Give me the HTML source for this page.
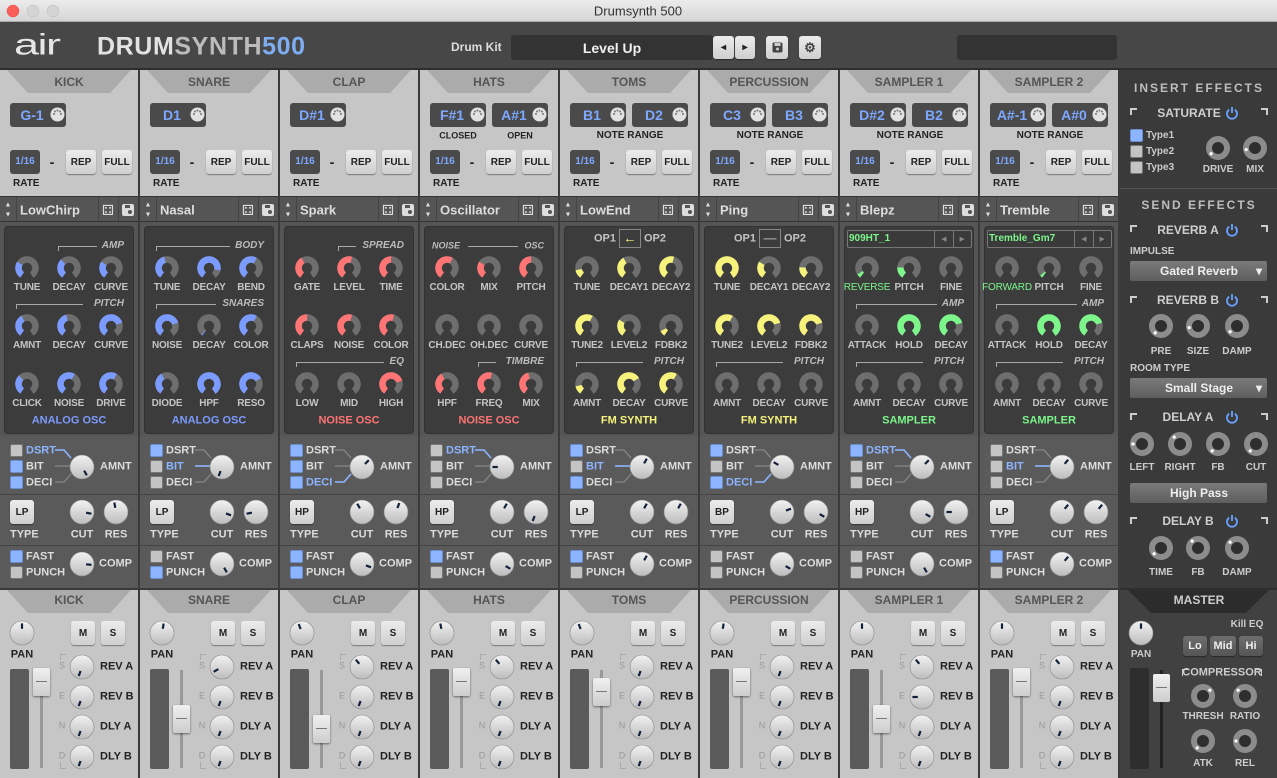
<!DOCTYPE html>
<html><head><meta charset="utf-8">
<style>
*{margin:0;padding:0;box-sizing:border-box}
body{width:1277px;height:778px;overflow:hidden;background:#3a3a3a;font-family:"Liberation Sans",sans-serif;font-weight:bold}
#app{position:relative;width:1277px;height:778px;overflow:hidden}
.a{position:absolute}
.t{position:absolute;white-space:nowrap;transform:translate(-50%,-50%);line-height:1}
.tl{position:absolute;white-space:nowrap;transform:translateY(-50%);line-height:1}
.tr{position:absolute;white-space:nowrap;transform:translate(-100%,-50%);line-height:1}
.btn{position:absolute;background:linear-gradient(#ececec,#cfcfcf);border-radius:3px;box-shadow:0 1px 1px rgba(0,0,0,.4);color:#222;font-size:10px;display:flex;align-items:center;justify-content:center}
.cb{position:absolute;width:13px;height:13px;border-radius:2px;background:#c4c4c4;border:1px solid #777}
.cb.on{background:#8cb4ff;border-color:#6a8fd0}
</style></head><body><div id="app"></div>
<script>
var H='';
function d(x,y,w,h,st){H+='<div class="a" style="left:'+x+'px;top:'+y+'px;width:'+w+'px;height:'+h+'px;'+(st||'')+'"></div>';}
function t(x,y,s,c,fs,ex){H+='<div class="t" style="left:'+x+'px;top:'+y+'px;color:'+c+';font-size:'+fs+'px;'+(ex||'')+'">'+s+'</div>';}
function tl(x,y,s,c,fs,ex){H+='<div class="tl" style="left:'+x+'px;top:'+y+'px;color:'+c+';font-size:'+fs+'px;'+(ex||'')+'">'+s+'</div>';}
function tr(x,y,s,c,fs,ex){H+='<div class="tr" style="left:'+x+'px;top:'+y+'px;color:'+c+';font-size:'+fs+'px;'+(ex||'')+'">'+s+'</div>';}
function btn(x,y,w,h,s,fs){H+='<div class="btn" style="left:'+x+'px;top:'+y+'px;width:'+w+'px;height:'+h+'px;font-size:'+(fs||10)+'px">'+s+'</div>';}
function cb(x,y,on){H+='<div class="cb'+(on?' on':'')+'" style="left:'+x+'px;top:'+y+'px"></div>';}
var C=2*Math.PI*8.5;
function ring(x,y,col,v){
 H+='<svg class="a" style="left:'+(x-14)+'px;top:'+(y-14)+'px" width="28" height="28"><g transform="rotate(125 14 14)"><circle cx="14" cy="14" r="8.5" fill="none" stroke="#6e6e6e" stroke-width="6.5" stroke-dasharray="'+(0.805*C)+' '+C+'"/>'+(v>0?'<circle cx="14" cy="14" r="8.5" fill="none" stroke="'+col+'" stroke-width="6.5" stroke-dasharray="'+(v*0.805*C)+' '+C+'"/>':'')+'</g></svg>';}
function lk(x,y,ang,r){ r=r||12;
 var a=(ang-90)*Math.PI/180,x1=x+Math.cos(a)*r*0.35,y1=y+Math.sin(a)*r*0.35,x2=x+Math.cos(a)*r*0.8,y2=y+Math.sin(a)*r*0.8;
 H+='<svg class="a" style="left:'+(x-r-2)+'px;top:'+(y-r-2)+'px;overflow:visible" width="'+(2*r+4)+'" height="'+(2*r+4)+'"><defs><linearGradient id="g" x1="0" y1="0" x2="0" y2="1"><stop offset="0" stop-color="#f2f2f2"/><stop offset="1" stop-color="#bdbdbd"/></linearGradient></defs><circle cx="'+(r+2)+'" cy="'+(r+2)+'" r="'+r+'" fill="url(#g)" stroke="#8a8a8a" stroke-width=".6"/><line x1="'+(x1-x+r+2)+'" y1="'+(y1-y+r+2)+'" x2="'+(x2-x+r+2)+'" y2="'+(y2-y+r+2)+'" stroke="#12203a" stroke-width="2.2"/></svg>';}
function dkk(x,y,ang){
 var a=(ang-90)*Math.PI/180;
 H+='<svg class="a" style="left:'+(x-13)+'px;top:'+(y-13)+'px" width="26" height="26"><circle cx="13" cy="13" r="9" fill="#2e2e2e" stroke="#8c8c8c" stroke-width="6"/><circle cx="'+(13+Math.cos(a)*9)+'" cy="'+(13+Math.sin(a)*9)+'" r="1.6" fill="#fff"/></svg>';}
function pw(x,y){H+='<svg class="a" style="left:'+(x-7)+'px;top:'+(y-7)+'px" width="14" height="14"><path d="M4.2 3.6A5 5 0 1 0 9.8 3.6" fill="none" stroke="#6aa0ff" stroke-width="1.8"/><line x1="7" y1="1" x2="7" y2="7" stroke="#6aa0ff" stroke-width="1.8"/></svg>';}
function corners(x1,x2,y){d(x1,y,7,2,'background:#ccc');d(x1,y,2,7,'background:#ccc');d(x2-7,y,7,2,'background:#ccc');d(x2-2,y,2,7,'background:#ccc');}

d(0,0,1277,22,'background:linear-gradient(#ececec,#d5d5d5);border-bottom:1px solid #aaa');
H+='<svg class="a" style="left:0;top:0" width="70" height="22"><circle cx="13" cy="11" r="6" fill="#fc5f57" stroke="#de4a43" stroke-width=".5"/><circle cx="33" cy="11" r="6" fill="#d4d4d4" stroke="#bbb" stroke-width=".5"/><circle cx="53" cy="11" r="6" fill="#d4d4d4" stroke="#bbb" stroke-width=".5"/></svg>';
t(638,11,'Drumsynth 500','#333',13,'font-weight:normal');
d(0,22,1277,48,'background:#474747;border-bottom:2px solid #2e2e2e');
tl(14,47,'air','#e6e6e6',30,'letter-spacing:-1px;font-weight:normal;transform:translateY(-55%) scaleX(1.5);transform-origin:left');
H+='<div class="tl" style="left:97px;top:47px;font-size:25px;letter-spacing:0.6px"><span style="color:#e2e2e2">DRUM</span><span style="color:#bcbcbc">SYNTH</span><span style="color:#7eaef2">500</span></div>';
tl(451,47,'Drum Kit','#ddd',12);
d(511,35,202,25,'background:#333;border-radius:3px');
t(612,48,'Level Up','#f0f0f0',14);
btn(713,36,21,23,'◂',10);btn(735,36,20,23,'▸',10);
btn(766,36,22,23,'<svg width="11" height="11"><rect x=".5" y=".5" width="10" height="10" rx="1.5" fill="#444"/><rect x="2.5" y="1" width="6" height="3" fill="#ccc"/><circle cx="5.5" cy="7" r="1.5" fill="#ccc"/></svg>');
btn(799,36,22,23,'<span style="font-size:13px;color:#444">⚙</span>');
d(957,35,160,25,'background:#333;border-radius:3px');

var S=[
{n:'KICK',notes:['G-1'],lab:'',p:'LowChirp',col:'#7b9bff',title:'ANALOG OSC',k:[['TUNE','DECAY','CURVE'],['AMNT','DECAY','CURVE'],['CLICK','NOISE','DRIVE']],v:[.3,.35,.3,.4,.45,.75,.35,.6,.6],sec:[[0,58,'AMP'],[1,16,'PITCH']],dist:[0,1,1],da:0,ang:[150,100,-10,95],f:'LP',fc:[1,0],fad:668,pan:0,sends:[200,200,200,200]},
{n:'SNARE',notes:['D1'],lab:'',p:'Nasal',col:'#7b9bff',title:'ANALOG OSC',k:[['TUNE','DECAY','BEND'],['NOISE','DECAY','COLOR'],['DIODE','HPF','RESO']],v:[.45,.85,.6,.75,0.02,.6,.4,1,.7],sec:[[0,16,'BODY'],[1,16,'SNARES']],dist:[1,0,0],da:1,ang:[200,110,-100,150],f:'LP',fc:[0,1],fad:705,pan:10,sends:[240,200,200,200]},
{n:'CLAP',notes:['D#1'],lab:'',p:'Spark',col:'#ff7474',title:'NOISE OSC',k:[['GATE','LEVEL','TIME'],['CLAPS','NOISE','COLOR'],['LOW','MID','HIGH']],v:[.4,.55,.5,.5,.55,.55,0,0,.75],sec:[[0,58,'SPREAD'],[2,16,'EQ']],dist:[1,1,1],da:2,ang:[45,-30,20,110],f:'HP',fc:[1,1],fad:715,pan:-20,sends:[-40,200,200,200]},
{n:'HATS',notes:['F#1','A#1'],lab:'2',p:'Oscillator',col:'#ff7474',title:'NOISE OSC',k:[['COLOR','MIX','PITCH'],['CH.DEC','OH.DEC','CURVE'],['HPF','FREQ','MIX']],v:[.6,.3,.5,0,0,0,.4,.55,.45],sec:[[2,58,'TIMBRE']],hats:1,dist:[0,0,0],da:0,ang:[-90,30,200,120],f:'HP',fc:[1,0],fad:668,pan:-10,sends:[-40,200,200,200]},
{n:'TOMS',notes:['B1','D2'],lab:'NOTE RANGE',p:'LowEnd',col:'#f6f27c',title:'FM SYNTH',k:[['TUNE','DECAY1','DECAY2'],['TUNE2','LEVEL2','FDBK2'],['AMNT','DECAY','CURVE']],v:[.15,.4,.55,.6,.3,.1,.15,.7,.6],sec:[[2,16,'PITCH']],op:'←',dist:[1,0,1],da:1,ang:[30,30,30,30],f:'LP',fc:[1,0],fad:678,pan:-20,sends:[200,200,200,200]},
{n:'PERCUSSION',notes:['C3','B3'],lab:'NOTE RANGE',p:'Ping',col:'#f6f27c',title:'FM SYNTH',k:[['TUNE','DECAY1','DECAY2'],['TUNE2','LEVEL2','FDBK2'],['AMNT','DECAY','CURVE']],v:[1,.3,.2,.6,.75,.75,0,0,0],sec:[[2,16,'PITCH']],op:'—',dist:[1,0,1],da:2,ang:[-60,70,120,120],f:'BP',fc:[0,0],fad:668,pan:10,sends:[200,200,200,200]},
{n:'SAMPLER 1',notes:['D#2','B2'],lab:'NOTE RANGE',p:'Blepz',col:'#7cf58a',title:'SAMPLER',k:[['REVERSE','PITCH','FINE'],['ATTACK','HOLD','DECAY'],['AMNT','DECAY','CURVE']],v:[.07,.2,0,0,1,.75,0,0,0],smp:'909HT_1',sec:[[1,16,'AMP'],[2,16,'PITCH']],dist:[1,0,0],da:0,ang:[45,120,-90,150],f:'HP',fc:[0,0],fad:705,pan:0,sends:[-40,-90,200,200]},
{n:'SAMPLER 2',notes:['A#-1','A#0'],lab:'NOTE RANGE',p:'Tremble',col:'#7cf58a',title:'SAMPLER',k:[['FORWARD','PITCH','FINE'],['ATTACK','HOLD','DECAY'],['AMNT','DECAY','CURVE']],v:[0,.05,0,0,1,.75,0,0,0],smp:'Tremble_Gm7',sec:[[1,16,'AMP'],[2,16,'PITCH']],dist:[0,0,0],da:1,ang:[40,40,40,40],f:'LP',fc:[1,0],fad:668,pan:0,sends:[-40,200,200,200]}
];
var kx=[27,69,111],ky=[268,326,384];
S.forEach(function(s,i){
 var o=i*140;
 d(o,70,138,126,'background:#c6c6c6');
 H+='<svg class="a" style="left:'+o+'px;top:70px" width="138" height="24"><path d="M7 0H131L110 23H28Z" fill="#ababab"/></svg>';
 t(o+69,82,s.n,'#555',12);
 function nb(bx,txt){d(bx,103,56,24,'background:#4a4a4a;border-radius:3px');t(bx+22,115,txt,'#7ea8ff',14);H+='<svg class="a" style="left:'+(bx+40)+'px;top:107px" width="15" height="15"><circle cx="7.5" cy="7.5" r="7" fill="#e2e2e2"/><g fill="#777"><circle cx="4" cy="7" r="1"/><circle cx="11" cy="7" r="1"/><circle cx="5" cy="4.5" r="1"/><circle cx="10" cy="4.5" r="1"/><circle cx="7.5" cy="3.5" r="1"/></g></svg>';}
 if(s.notes.length==1){nb(o+10,s.notes[0]);}
 else{nb(o+10,s.notes[0]);nb(o+72,s.notes[1]);
  if(s.lab=='2'){t(o+38,136,'CLOSED','#222',9);t(o+100,136,'OPEN','#222',9);}else t(o+70,136,s.lab,'#222',10);}
 d(o+10,150,30,24,'background:#4a4a4a;border-radius:3px');t(o+25,162,'1/16','#7ea8ff',10);
 t(o+52,162,'-','#222',14);
 btn(o+66,150,30,24,'REP');btn(o+102,150,30,24,'FULL');
 tl(o+13,184,'RATE','#222',10);
 d(o+138,70,2,708,'background:#3a3a3a');
 d(o,196,138,26,'background:#555;border-top:1px solid #333;border-bottom:1px solid #333');
 t(o+8,205,'▲','#ddd',7);t(o+8,215,'▼','#ddd',7);
 d(o+16,197,1,24,'background:#444');d(o+98,197,1,24,'background:#444');d(o+118,197,1,24,'background:#444');
 tl(o+20,210,s.p,'#ddd',13);
 t(o+108,210,'⚃','#ddd',14,'font-weight:normal');
 H+='<svg class="a" style="left:'+(o+122)+'px;top:204px" width="12" height="12"><rect x="0" y="0" width="12" height="12" rx="2" fill="#ddd"/><rect x="3" y="1" width="5" height="3" fill="#555"/><circle cx="8" cy="8" r="2" fill="#555"/></svg>';
 d(o,222,138,214,'background:#555');
 d(o+4,226,130,208,'background:#3c3c3c;border-radius:4px;box-shadow:inset 0 0 0 1px #333');
 for(var r=0;r<3;r++)for(var c=0;c<3;c++){ring(o+kx[c],ky[r],s.col,s.v[r*3+c]);var lc='#c4c4c4',ex='letter-spacing:-0.2px;';if(r==0&&c==0&&s.smp){lc='#7cf58a';ex+='font-weight:normal';}t(o+kx[c],ky[r]+20,s.k[r][c],lc,10,ex);}
 (s.sec||[]).forEach(function(q){var y=ky[q[0]]-22,w=q[2].length*7;var e=123-w-5;d(o+q[1],y,e-q[1],1,'background:#aaa');d(o+q[1],y,1,5,'background:#aaa');tr(o+124,y,q[2],'#bbb',10,'font-style:italic');});
 if(s.hats){tl(o+12,246,'NOISE','#bbb',9,'font-style:italic');d(o+48,246,50,1,'background:#aaa');tr(o+124,246,'OSC','#bbb',9,'font-style:italic');}
 if(s.op){t(o+45,239,'OP1','#c4c4c4',11);t(o+95,239,'OP2','#c4c4c4',11);d(o+59,229,22,19,'border:1.5px solid #888');t(o+70,238,s.op,s.op=='←'?'#f6f27c':'#999',13);}
 if(s.smp){d(o+7,230,125,18,'border:1.5px solid #777;border-radius:2px;background:#3a3a3a');tl(o+9,239,s.smp,'#7cf58a',10);d(o+94,231,1,16,'background:#777');d(o+113,231,1,16,'background:#777');t(o+104,239,'◂','#888',9);t(o+122,239,'▸','#888',9);}
 t(o+69,421,s.title,s.col,11);
 d(o,436,138,154,'background:#5a5a5a');
 var dl=['DSRT','BIT','DECI'];
 for(var j=0;j<3;j++){cb(o+10,444+j*16,s.dist[j]);tl(o+26,451+j*16,dl[j],j==s.da?'#8cb4ff':'#ddd',11);}
 H+='<svg class="a" style="left:'+(o+52)+'px;top:444px" width="24" height="46"><path d="M3 6H12L19 14M3 22H19M3 38H12L19 30" fill="none" stroke="#888" stroke-width="1.3"/><path d="'+(['M3 6H12L19 14','M3 22H19','M3 38H12L19 30'][s.da])+'" fill="none" stroke="#8cb4ff" stroke-width="1.6"/></svg>';
 lk(o+82,467,s.ang[0]);tl(o+100,467,'AMNT','#ddd',11);
 d(o,494,138,1,'background:#444');
 btn(o+10,500,24,24,s.f,10);tl(o+10,535,'TYPE','#ddd',11);
 lk(o+82,512,s.ang[1]);lk(o+116,512,s.ang[2]);t(o+82,535,'CUT','#ddd',11);t(o+116,535,'RES','#ddd',11);
 d(o,545,138,1,'background:#444');
 cb(o+10,550,s.fc[0]);cb(o+10,566,s.fc[1]);tl(o+26,557,'FAST','#ddd',11);tl(o+26,573,'PUNCH','#ddd',11);
 lk(o+82,564,s.ang[3]);tl(o+99,564,'COMP','#ddd',11);
 d(o,588,138,190,'background:#c6c6c6;border-top:2px solid #3a3a3a');
 H+='<svg class="a" style="left:'+o+'px;top:590px" width="138" height="24"><path d="M7 0H131L110 23H28Z" fill="#ababab"/></svg>';
 t(o+69,600,s.n,'#555',12);
 lk(o+22,633,s.pan,12);t(o+22,655,'PAN','#222',11);
 btn(o+71,621,24,24,'M',10);btn(o+101,621,24,24,'S',10);
 d(o+10,669,19,100,'background:#5a5a5a;border-radius:2px');
 d(o+40,670,3,98,'background:#999');
 d(o+33,s.fad,17,28,'background:linear-gradient(#f0f0f0,#cdcdcd);border-radius:2px;box-shadow:0 1px 2px rgba(0,0,0,.5)');d(o+36,s.fad+13,11,1,'background:#777');
 d(o+60,654,6,1,'background:#aaa');d(o+60,654,1,6,'background:#aaa');d(o+60,768,6,1,'background:#aaa');d(o+60,762,1,6,'background:#aaa');
 'SENDS'.split('').forEach(function(ch,j){t(o+62,674+j*30-8,ch,'#999',9,'font-weight:normal');});
 var sl=['REV A','REV B','DLY A','DLY B'];
 for(var j=0;j<4;j++){lk(o+82,667+j*30,s.sends[j],12);tl(o+100,667+j*30,sl[j],'#222',11);}
});

var R=1120;
d(R,70,157,520,'background:#3a3a3a');
t(1199,88,'INSERT EFFECTS','#bdbdbd',12,'letter-spacing:2px');
corners(1130,1268,108);t(1189,113,'SATURATE','#cfcfcf',12);pw(1232,113);
cb(1130,129,1);cb(1130,145,0);cb(1130,161,0);
tl(1146,136,'Type1','#ccc',10);tl(1146,152,'Type2','#ccc',10);tl(1146,168,'Type3','#ccc',10);
dkk(1218,148,230);dkk(1255,148,260);t(1218,170,'DRIVE','#ccc',10);t(1255,170,'MIX','#ccc',10);
d(R,188,157,1,'background:#555');
t(1199,205,'SEND EFFECTS','#bdbdbd',12,'letter-spacing:2px');
corners(1130,1268,225);t(1188,230,'REVERB A','#cfcfcf',12);pw(1232,230);
tl(1130,252,'IMPULSE','#ccc',10);
d(1130,261,137,20,'background:linear-gradient(#7a7a7a,#5e5e5e);border-radius:2px');t(1199,271,'Gated Reverb','#eee',12);t(1259,271,'▾','#eee',12);
corners(1130,1268,296);t(1188,300,'REVERB B','#cfcfcf',12);pw(1232,300);
dkk(1161,326,220);dkk(1198,326,260);dkk(1237,326,230);
t(1161,352,'PRE','#ccc',10);t(1198,352,'SIZE','#ccc',10);t(1237,352,'DAMP','#ccc',10);
tl(1130,369,'ROOM TYPE','#ccc',10);
d(1130,378,137,20,'background:linear-gradient(#7a7a7a,#5e5e5e);border-radius:2px');t(1199,388,'Small Stage','#eee',12);t(1259,388,'▾','#eee',12);
corners(1130,1268,413);t(1188,417,'DELAY A','#cfcfcf',12);pw(1232,417);
dkk(1142,444,270);dkk(1180,444,-40);dkk(1218,444,220);dkk(1256,444,220);
t(1142,468,'LEFT','#ccc',10);t(1180,468,'RIGHT','#ccc',10);t(1218,468,'FB','#ccc',10);t(1256,468,'CUT','#ccc',10);
d(1130,483,137,20,'background:linear-gradient(#7a7a7a,#5e5e5e);border-radius:2px');t(1199,493,'High Pass','#eee',12);
corners(1130,1268,517);t(1188,521,'DELAY B','#cfcfcf',12);pw(1232,521);
dkk(1161,548,230);dkk(1198,548,-40);dkk(1237,548,-50);
t(1161,573,'TIME','#ccc',10);t(1198,573,'FB','#ccc',10);t(1237,573,'DAMP','#ccc',10);
d(R,588,157,190,'background:#414141;border-top:2px solid #2e2e2e');
H+='<svg class="a" style="left:'+R+'px;top:590px" width="157" height="24"><path d="M8 0H149L126 23H31Z" fill="#2c2c2c"/></svg>';
t(1199,600,'MASTER','#ccc',12);
lk(1141,633,0,12);t(1141,655,'PAN','#ccc',10);
t(1247,625,'Kill EQ','#ccc',10);
btn(1183,636,24,20,'Lo',11);btn(1210,636,26,20,'Mid',11);btn(1239,636,24,20,'Hi',11);
var bs='background:linear-gradient(#6e6e6e,#555);color:#eee';
H=H.replace(/(<div class="btn" style="left:(1183|1210|1239)px;top:636px;[^"]*)"/g,'$1;'+bs+'"');
d(1182,669,1,7,'background:#ccc');d(1182,669,7,1,'background:#ccc');d(1255,669,7,1,'background:#ccc');d(1261,669,1,7,'background:#ccc');
t(1222,673,'COMPRESSOR','#ccc',11);
dkk(1203,696,50);dkk(1245,696,-50);dkk(1203,741,220);dkk(1245,741,270);
t(1203,717,'THRESH','#ccc',10);t(1245,717,'RATIO','#ccc',10);t(1203,764,'ATK','#ccc',10);t(1245,764,'REL','#ccc',10);
d(1130,668,19,101,'background:#2e2e2e;border-radius:2px');
d(1160,670,3,98,'background:#222');
d(1153,674,17,28,'background:linear-gradient(#f0f0f0,#cdcdcd);border-radius:2px');d(1156,687,11,1,'background:#777');
document.getElementById('app').innerHTML=H;
</script></body></html>
